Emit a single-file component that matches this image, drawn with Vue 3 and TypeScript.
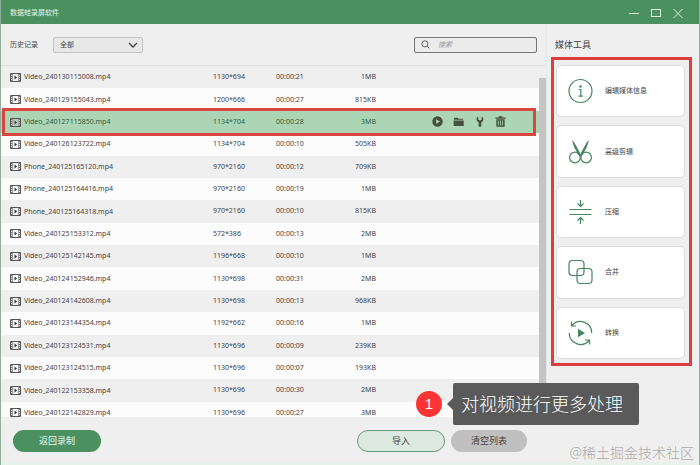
<script setup lang="ts">
import { ref } from 'vue'

interface Recording {
  name: string
  resolution: string
  duration: string
  size: string
}

const recordings: Recording[] = [
  { name: 'Video_240130115008.mp4', resolution: '1130*694', duration: '00:00:21', size: '1MB' },
  { name: 'Video_240129155043.mp4', resolution: '1200*666', duration: '00:00:27', size: '815KB' },
  { name: 'Video_240127115850.mp4', resolution: '1134*704', duration: '00:00:28', size: '3MB' },
  { name: 'Video_240126123722.mp4', resolution: '1134*704', duration: '00:00:10', size: '505KB' },
  { name: 'Phone_240125165120.mp4', resolution: '970*2160', duration: '00:00:12', size: '709KB' },
  { name: 'Phone_240125164416.mp4', resolution: '970*2160', duration: '00:00:19', size: '1MB' },
  { name: 'Phone_240125164318.mp4', resolution: '970*2160', duration: '00:00:10', size: '815KB' },
  { name: 'Video_240125153312.mp4', resolution: '572*386', duration: '00:00:13', size: '2MB' },
  { name: 'Video_240125142145.mp4', resolution: '1196*668', duration: '00:00:10', size: '1MB' },
  { name: 'Video_240124152946.mp4', resolution: '1130*698', duration: '00:00:31', size: '2MB' },
  { name: 'Video_240124142608.mp4', resolution: '1130*698', duration: '00:00:13', size: '968KB' },
  { name: 'Video_240123144354.mp4', resolution: '1192*662', duration: '00:00:16', size: '1MB' },
  { name: 'Video_240123124531.mp4', resolution: '1130*696', duration: '00:00:09', size: '239KB' },
  { name: 'Video_240123124515.mp4', resolution: '1130*696', duration: '00:00:07', size: '193KB' },
  { name: 'Video_240122153358.mp4', resolution: '1130*696', duration: '00:00:30', size: '2MB' },
  { name: 'Video_240122142829.mp4', resolution: '1130*696', duration: '00:00:27', size: '3MB' },
]

const tools = [
  { id: 'info', label: '编辑媒体信息' },
  { id: 'cut', label: '高级剪辑' },
  { id: 'compress', label: '压缩' },
  { id: 'merge', label: '合并' },
  { id: 'convert', label: '转换' },
]

const selected = ref('Video_240127115850.mp4')
const filter = ref('all')
const keyword = ref('')
</script>

<template>
  <div class="window">
    <header class="titlebar">
      <h1>数据蛙录屏软件</h1>
      <div class="window-controls">
        <button type="button" aria-label="最小化">
          <svg viewBox="0 0 12 12"><path d="M1 6.500h10" /></svg>
        </button>
        <button type="button" aria-label="最大化">
          <svg viewBox="0 0 12 12"><rect x="1.500" y="2.500" width="9" height="7" /></svg>
        </button>
        <button type="button" aria-label="关闭">
          <svg viewBox="0 0 12 12"><path d="M1.500 2l9 9M10.500 2l-9 9" /></svg>
        </button>
      </div>
    </header>

    <div class="body">
      <main class="history">
        <div class="toolbar">
          <label for="filter">历史记录</label>
          <span class="select">
            <select id="filter" v-model="filter">
              <option value="all">全部</option>
            </select>
            <svg viewBox="0 0 10 6"><path d="M1 1l4 4 4-4" /></svg>
          </span>
          <label class="search">
            <svg viewBox="0 0 10 10"><circle cx="4.300" cy="4.300" r="3.400" /><path d="M6.800 6.800l2.500 2.500" /></svg>
            <input v-model="keyword" type="search" placeholder="搜索" aria-label="搜索" />
          </label>
        </div>

        <div class="list">
          <table>
            <colgroup>
              <col class="c-name" />
              <col class="c-res" />
              <col class="c-time" />
              <col class="c-size" />
              <col />
            </colgroup>
            <tbody>
              <tr
                v-for="item in recordings"
                :key="item.name"
                :class="{ selected: item.name === selected }"
                @click="selected = item.name"
              >
                <td class="name">
                  <svg class="film" viewBox="0 0 11 9">
                    <path class="strip" d="M.5.5h10v8H.5z" />
                    <path class="edge" d="M2.500 1v7M8.500 1v7" />
                    <path class="holes" d="M1.500 1v7M9.500 1v7" />
                    <path class="play" d="M4.500 2.500l2.600 2-2.600 2z" />
                  </svg>
                  <span>{{ item.name }}</span>
                </td>
                <td>{{ item.resolution }}</td>
                <td>{{ item.duration }}</td>
                <td class="size">{{ item.size }}</td>
                <td>
                  <div v-if="item.name === selected" class="actions">
                    <button type="button" aria-label="播放">
                      <svg viewBox="0 0 12 12"><path fill-rule="evenodd" d="M6 .3a5.700 5.700 0 1 1 0 11.400A5.700 5.700 0 0 1 6 .3zM4.500 3.500v5L8.700 6z" /></svg>
                    </button>
                    <button type="button" aria-label="打开文件夹">
                      <svg viewBox="0 0 12 12"><path d="M1 1.800h4l1 1.300h5v1.100H1zM.7 5h11v6H.7z" /></svg>
                    </button>
                    <button type="button" aria-label="工具">
                      <svg viewBox="0 0 12 12"><path d="M4.600.5v3.200L6.500 5l1.900-1.300V.5C10.600 1.500 11 4.800 8.900 6.200l-.9.6v4.300q-1.500 1.300-3 0V6.800l-.9-.6C2 4.800 2.400 1.500 4.600.5z" /></svg>
                    </button>
                    <button type="button" aria-label="删除">
                      <svg viewBox="0 0 12 12"><path fill-rule="evenodd" d="M4 .3h4v1.200h3.500v1.400H.5V1.500H4zM1.500 3.600h9v8.100h-9zM3.200 4.800v5.500h.9V4.800zM5.500 4.800v5.500h1V4.800zM7.900 4.800v5.500h.9V4.800z" /></svg>
                    </button>
                  </div>
                </td>
              </tr>
            </tbody>
          </table>
          <div class="scrollbar"><div class="thumb"></div></div>
          <div class="row-outline"></div>
        </div>
      </main>

      <aside class="tools">
        <h2>媒体工具</h2>
        <div class="tool-frame">
          <button v-for="tool in tools" :key="tool.id" type="button" class="tool">
            <svg viewBox="0 0 26 26">
              <template v-if="tool.id === 'info'">
                <circle cx="12.500" cy="13" r="11.500" />
                <path d="M10.800 11.500h2V18M10.500 18.200h4.400" />
                <circle class="solid" cx="12.500" cy="8.500" r="1.200" />
              </template>
              <template v-else-if="tool.id === 'cut'">
                <circle cx="6.900" cy="18.500" r="5.300" />
                <circle cx="18.100" cy="18.500" r="5.300" />
                <path class="solid" d="M4.400 1C4.500 5.500 7.500 11.500 11.700 17.500L13.300 16.500C10.500 11 7.500 5 4.400 1z" />
                <path class="solid" d="M20.600 1C20.500 5.500 17.500 11.500 13.300 17.500L11.700 16.500C14.500 11 17.500 5 20.600 1z" />
              </template>
              <template v-else-if="tool.id === 'compress'">
                <path d="M1.500 10.500h22M1.500 15.500h22M12.500 1v6.500M9.500 4.500l3 3 3-3M12.500 25v-6.500M9.500 21.500l3-3 3 3" />
              </template>
              <template v-else-if="tool.id === 'merge'">
                <rect x="1" y="1.500" width="15" height="15" rx="3.500" />
                <rect x="9" y="9.500" width="15" height="15" rx="3.500" />
              </template>
              <template v-else>
                <path d="M4 5.500A11.200 11.200 0 0 1 23.700 13M21 20.500A11.200 11.200 0 0 1 1.300 13M3.500 1.500V6h4.700M21.500 24.500V20h-4.700" />
                <path class="solid" d="M10 8.800l7 4.200-7 4.200z" />
              </template>
            </svg>
            <span>{{ tool.label }}</span>
          </button>
        </div>
      </aside>
    </div>

    <footer class="footer">
      <button type="button" class="pill primary">返回录制</button>
      <button type="button" class="pill import">导入</button>
      <button type="button" class="pill clear">清空列表</button>
    </footer>

    <div class="callout">
      <span class="step">1</span>
      <p>对视频进行更多处理</p>
    </div>
    <span class="watermark">@稀土掘金技术社区</span>
  </div>
</template>

<style>
body {
  margin: 0;
}
</style>

<style scoped>
.window {
  position: relative;
  display: flex;
  flex-direction: column;
  box-sizing: border-box;
  min-height: 100vh;
  border: 1px solid #8fae9c;
  border-top: 0;
  background: #efefef;
  color: #444;
  font-family: "Noto Sans", "Noto Sans CJK SC", sans-serif;
  font-size: 7px;
  line-height: 12px;
}

button,
input,
select {
  margin: 0;
  font: inherit;
  color: inherit;
}

button {
  border: 0;
  padding: 0;
  background: none;
  cursor: pointer;
}

svg {
  display: block;
  flex: none;
  fill: none;
}

.titlebar {
  display: flex;
  align-items: center;
  justify-content: space-between;
  height: 24px;
  padding: 2px 15px 0 9px;
  box-sizing: border-box;
  background: #4b915f;
  color: #e4f3e8;
}

h1,
h2,
p {
  margin: 0;
  font-weight: 400;
}

h1 {
  font-size: 7px;
}

.window-controls {
  display: flex;
  gap: 10px;
}

.window-controls svg {
  width: 12px;
  height: 12px;
  stroke: #d9f2e0;
}

.body {
  display: flex;
}

.history {
  flex: 1;
  min-width: 0;
  border-right: 1px solid #e4e8e6;
}

.toolbar {
  display: flex;
  align-items: center;
  height: 41px;
  padding: 0 9px;
  border-bottom: 1px solid #e0e0e0;
}

.select {
  position: relative;
  width: 90px;
  margin-left: 15px;
}

.select select {
  display: block;
  appearance: none;
  box-sizing: border-box;
  width: 100%;
  height: 16px;
  padding: 0 6px;
  border: 1px solid #c2c2c2;
  border-radius: 2px;
  background: #e8e8e8;
}

.select svg {
  position: absolute;
  top: 5px;
  right: 5px;
  width: 10px;
  height: 6px;
  stroke: #444;
  stroke-width: 1.4;
  pointer-events: none;
}

.search {
  display: flex;
  align-items: center;
  gap: 8px;
  box-sizing: border-box;
  width: 123px;
  height: 16px;
  margin-left: auto;
  padding: 0 6px;
  border: 1px solid #777;
  border-radius: 2px;
  background: #ebebeb;
}

.search svg {
  width: 9px;
  height: 9px;
  stroke: #555;
}

.search input {
  flex: 1;
  min-width: 0;
  padding: 0;
  border: 0;
  outline: 0;
  background: none;
}

.search input::placeholder {
  color: #999;
  font-style: italic;
}

.list {
  position: relative;
  display: flex;
  height: 351px;
  overflow: hidden;
}

table {
  flex: 1;
  height: 358px;
  table-layout: fixed;
  border-collapse: collapse;
  white-space: nowrap;
}

.c-name {
  width: 212px;
}

.c-res {
  width: 63px;
}

.c-time {
  width: 60px;
}

.c-size {
  width: 40px;
}

tr {
  background: #fcfcfc;
}

tr:nth-child(odd) {
  background: #efefef;
}

tr.selected {
  background: #acd5b5;
  color: #2f5f43;
}

td {
  padding: 0;
  vertical-align: middle;
}

.name svg,
.name span {
  display: inline-block;
  vertical-align: middle;
}

.name {
  padding-left: 9px;
}

.film {
  width: 11px;
  height: 9px;
  margin-right: 3px;
}

.strip {
  stroke: #555;
}

.edge {
  stroke: #999;
}

.holes {
  stroke: #777;
  stroke-dasharray: 1 1;
}

.play {
  fill: #333;
}

.size {
  text-align: right;
}

.actions {
  display: flex;
  gap: 10px;
  padding-left: 56px;
}

.actions svg {
  width: 11px;
  height: 11px;
  fill: #46523f;
}

.scrollbar {
  flex: none;
  width: 7px;
  padding-top: 12px;
  background: #efefef;
}

.thumb {
  height: 100%;
  background: #c4c4c4;
}

.row-outline {
  position: absolute;
  top: 42px;
  left: 1px;
  right: 10px;
  height: 22px;
  border: 3px solid #d9453f;
  pointer-events: none;
}

.tools {
  flex: none;
  width: 152px;
  padding: 15px 7px 0 4px;
  box-sizing: border-box;
}

h2 {
  padding-left: 4px;
  font-size: 9px;
}

.tool-frame {
  display: grid;
  grid-auto-rows: 1fr;
  gap: 8px;
  box-sizing: border-box;
  min-height: 309px;
  margin-top: 6px;
  padding: 5px 4px 4px 2px;
  border: 3px solid #dc3e40;
}

.tool {
  display: flex;
  align-items: center;
  gap: 11px;
  padding: 0 11px;
  border: 1px solid #d9dddd;
  border-radius: 5px;
  background: #fff;
}

.tool svg {
  width: 26px;
  height: 26px;
  stroke: #47855f;
  stroke-width: 1.2;
}

.tool .solid {
  fill: #47855f;
  stroke: none;
}

.footer {
  display: flex;
  flex: 1;
  align-items: flex-start;
  padding: 13px 12px 11px;
  border-bottom: 2px solid #e6f2e8;
}

.pill {
  box-sizing: border-box;
  width: 88px;
  height: 22px;
  border-radius: 11px;
  font-size: 9px;
}

.primary {
  background: #4b915f;
  color: #e9f6ec;
}

.import {
  margin-left: 256px;
  border: 1px solid #6c9c80;
  background: #dbe9e0;
}

.clear {
  width: 76px;
  margin-left: 6px;
  background: #c0c0c0;
}

.callout {
  position: absolute;
  top: 383px;
  left: 415px;
  display: flex;
  align-items: center;
  gap: 11px;
  color: #fff;
}

.step {
  width: 26px;
  border-radius: 50%;
  background: #fc3434;
  font-family: "Liberation Sans", sans-serif;
  font-size: 15px;
  line-height: 26px;
  text-align: center;
}

.callout p {
  position: relative;
  padding: 0 16px 0 8px;
  border-radius: 2px;
  background: #5a5a5a;
  font-size: 18px;
  font-weight: 300;
  line-height: 42px;
  white-space: nowrap;
}

.callout p::before {
  content: "";
  position: absolute;
  top: 15px;
  left: -6px;
  border: 6px solid transparent;
  border-left: 0;
  border-right-color: #5a5a5a;
}

.watermark {
  position: absolute;
  right: 5px;
  bottom: 4px;
  color: #aaa;
  font-size: 14px;
  font-weight: 300;
  line-height: 16px;
}
</style>
